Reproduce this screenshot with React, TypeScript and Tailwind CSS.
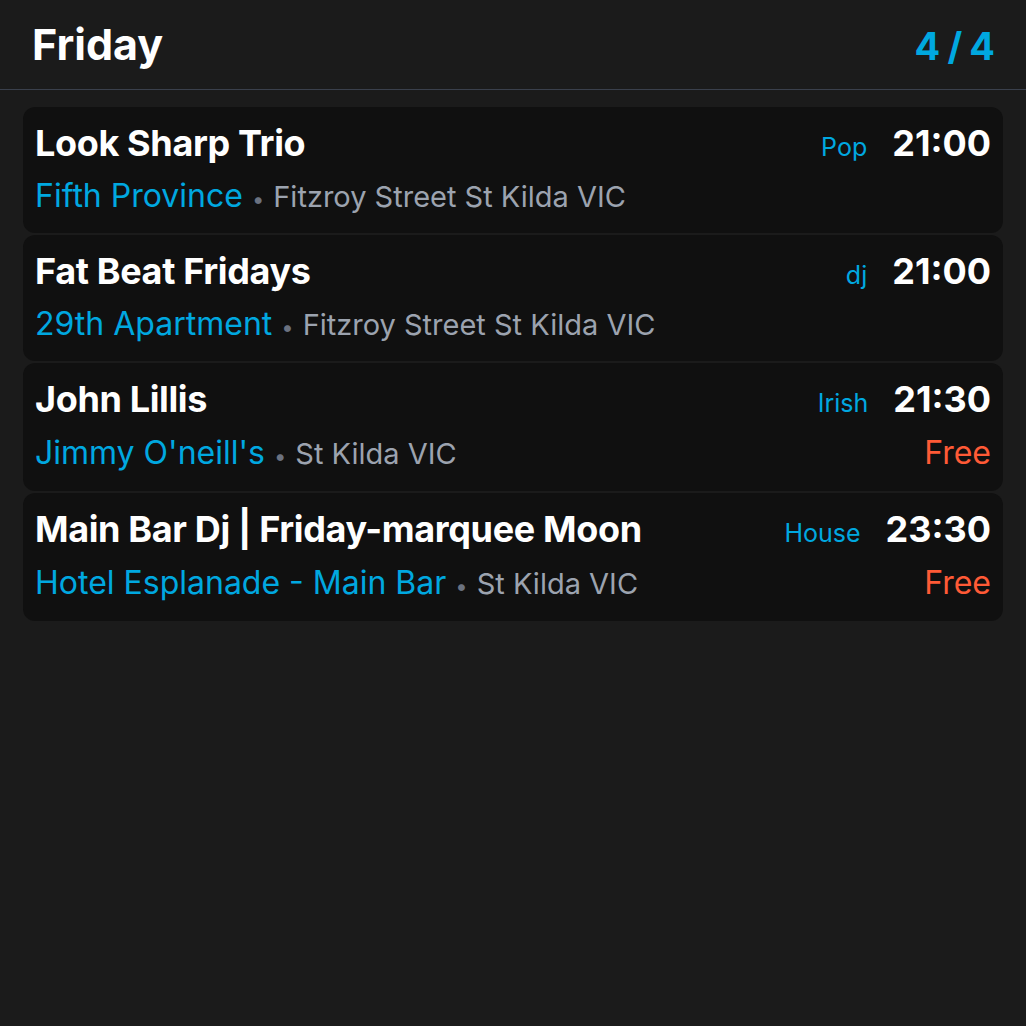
const events = [
  { title: 'Look Sharp Trio', venue: 'Fifth Province', place: 'Fitzroy Street St Kilda VIC', genre: 'Pop', time: '21:00', free: false },
  { title: 'Fat Beat Fridays', venue: '29th Apartment', place: 'Fitzroy Street St Kilda VIC', genre: 'dj', time: '21:00', free: false },
  { title: 'John Lillis', venue: "Jimmy O'neill's", place: 'St Kilda VIC', genre: 'Irish', time: '21:30', free: true },
  { title: 'Main Bar Dj | Friday-marquee Moon', venue: 'Hotel Esplanade - Main Bar', place: 'St Kilda VIC', genre: 'House', time: '23:30', free: true },
];

export default function App() {
  return (
    <main className="min-h-screen w-[1026px] h-[1026px] bg-[#1b1b1b] text-white font-['Inter',sans-serif]">
      {/* header */}
      <header className="h-[90px] flex items-baseline justify-between px-8 pt-[16px] border-b border-[#3a404c]">
        <h1 className="text-[43px] leading-[56px] font-bold">Friday</h1>
        <span className="text-[38px] leading-[56px] font-bold tracking-tight text-[#00a8e0]">4 / 4</span>
      </header>

      <div className="px-[23px] pt-[17px] flex flex-col gap-[2px]">
        {events.map(e => (
          <div key={e.title} className="rounded-xl bg-[#101010] pl-3 pr-3 pt-[13px] pb-[17px] flex flex-col gap-[10px]">
            <div className="flex items-baseline justify-between h-[46px]">
              <div className="text-[36px] leading-[46px] font-bold tracking-[-0.01em] truncate">{e.title}</div>
              <div className="flex items-baseline gap-[25px] shrink-0">
                <span className="text-[25px] leading-none text-[#00a8e0]">{e.genre}</span>
                <span className="text-[36px] leading-[46px] font-bold">{e.time}</span>
              </div>
            </div>
            <div className="flex items-baseline justify-between whitespace-nowrap">
              <div className="flex items-baseline">
                <span className="text-[32px] leading-[40px] text-[#00a8e0]">{e.venue}</span>
                <span className="text-[22px] leading-none text-[#6b7280] mx-[9px]">•</span>
                <span className="text-[29px] leading-none text-[#9ca3af]">{e.place}</span>
              </div>
              {e.free && <span className="text-[32px] leading-[42px] text-[#ff5a36]">Free</span>}
            </div>
          </div>
        ))}
      </div>
    </main>
  );
}
